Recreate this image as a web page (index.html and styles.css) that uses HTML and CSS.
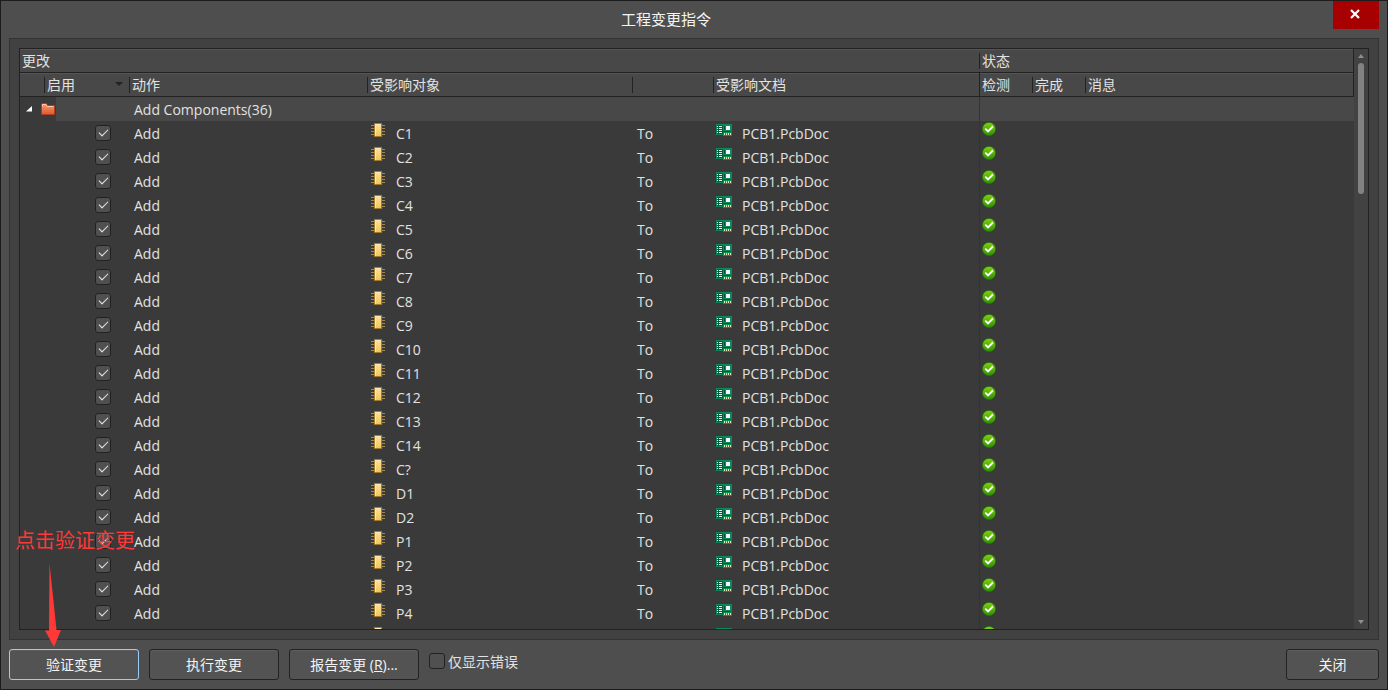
FILE: index.html
```html
<!DOCTYPE html>
<html lang="zh-CN">
<head>
<meta charset="utf-8">
<title>工程变更指令</title>
<link rel="stylesheet" href="styles.css">
</head>
<body>
<svg class="sprite" aria-hidden="true">
  <defs>
    <linearGradient id="chip-fill" x1="0" y1="0" x2="0" y2="1"><stop offset="0" stop-color="#fbe2a4"/><stop offset="1" stop-color="#f3c558"/></linearGradient>
    <linearGradient id="folder-fill" x1="0" y1="0" x2="0" y2="1"><stop offset="0" stop-color="#f79a6c"/><stop offset="1" stop-color="#dd5a35"/></linearGradient>
    <linearGradient id="ok-fill" x1="0" y1="0" x2="0" y2="1"><stop offset="0" stop-color="#7fd40c"/><stop offset="1" stop-color="#2f8f06"/></linearGradient>
  </defs>
  <symbol id="chip" viewBox="0 0 14 14">
    <path d="M0 2.5h14M0 5.5h14M0 8.5h14M0 11.5h14" stroke="#a08a45"/>
    <rect x="3.5" y=".5" width="7" height="13" fill="url(#chip-fill)" stroke="#a07c2c"/>
    <path d="M4.500 12.500V1.500H9.500" fill="none" stroke="#fdeab8"/>
  </symbol>
  <symbol id="board" viewBox="0 0 16 12">
    <path d="M0 0h16v12H7v-1H0z" fill="#0b8a5c"/>
    <path d="M1 1h6v9H1z" fill="#075c3e"/>
    <path d="M1 2.500h1M1 4.500h1M1 6.500h1M1 8.500h1M3 2.500h3M3 4.500h3M3 6.500h3M3 8.500h3" stroke="#dff3e6"/>
    <path d="M7 7.500h8M8.500 2v4" stroke="#06583b"/>
    <path d="M10 2h4v4h-4z" fill="#f4f4f4"/>
    <path d="M8 9.500h1M10 9.500h1M12 9.500h1M14 9.500h1M8 10.500h1M10 10.500h1M12 10.500h1M14 10.500h1" stroke="#e6e7b0"/>
  </symbol>
  <symbol id="ok" viewBox="0 0 14 14">
    <circle cx="7" cy="7" r="6.600" fill="url(#ok-fill)" stroke="#2c6d0c" stroke-width=".7"/>
    <path d="M3.300 6.700l2.700 2.800 4.900-5" fill="none" stroke="#fff" stroke-width="1.900"/>
  </symbol>
  <symbol id="folder" viewBox="0 0 14 12">
    <path d="M.5 11.500V1.500l1-1h4l1 2h7v9z" fill="url(#folder-fill)" stroke="#b23c1c"/>
    <path d="M1.500 3.500V1.500h3.500l1 2h6.500" fill="none" stroke="#ffc6a2"/>
  </symbol>
</svg>

<main class="dialog">
  <header class="titlebar">
    <h1 class="title">工程变更指令</h1>
    <button class="close" type="button" aria-label="关闭窗口"><svg width="10" height="10" viewBox="0 0 10 10"><path d="M1 1l8 8M9 1L1 9" stroke="#fff" stroke-width="2.200"/></svg></button>
  </header>

  <section class="panel">
    <div class="list">
      <div class="view">
        <table class="changes">
          <colgroup>
            <col class="col-tree"><col class="col-enable"><col class="col-action"><col class="col-object"><col class="col-to"><col class="col-doc"><col class="col-check"><col class="col-done"><col>
          </colgroup>
          <thead>
            <tr>
              <th colspan="6">更改</th>
              <th colspan="3" class="split">状态</th>
            </tr>
            <tr>
              <th></th>
              <th class="split sorted">启用</th>
              <th class="split">动作</th>
              <th class="split">受影响对象</th>
              <th class="split"></th>
              <th class="split">受影响文档</th>
              <th class="split full">检测</th>
              <th class="split">完成</th>
              <th class="split">消息</th>
            </tr>
          </thead>
          <tbody id="rows">
            <tr class="group">
              <td colspan="2"><div class="node"><svg class="arrow" viewBox="0 0 6 6"><path d="M6 0v5.500H0z" fill="#fff"/></svg><svg class="folder"><use href="#folder"/></svg></div></td>
              <td class="text" colspan="4">Add Components(36)</td>
              <td class="state"></td><td></td><td></td>
            </tr>
          </tbody>
        </table>
      </div>
      <div class="scrollbar">
        <svg class="tip" viewBox="0 0 6 4"><path d="M3 0l3 4H0z" fill="#8c8c8c"/></svg>
        <div class="thumb"></div>
        <svg class="tip end" viewBox="0 0 6 4"><path d="M0 0h6L3 4z" fill="#8c8c8c"/></svg>
      </div>
    </div>
  </section>

  <footer class="actions">
    <button class="btn primary" type="button">验证变更</button>
    <button class="btn" type="button">执行变更</button>
    <button class="btn" type="button">报告变更 (<u>R</u>)...</button>
    <label class="filter"><input class="tick" type="checkbox">仅显示错误</label>
    <button class="btn dismiss" type="button">关闭</button>
  </footer>

  <div class="note">
    <span class="note-text">点击验证变更</span>
    <svg class="note-arrow" viewBox="0 0 16 84"><path d="M4.500 0L11.500 67H16L9 84 0 67.500H4z" fill="#ff3838"/></svg>
  </div>
</main>
<script src="rows.js"></script>
</body>
</html>
```
FILE: styles.css
```css
* { box-sizing: border-box; }

body {
  margin: 0;
  background: #1c1c1c;
  color: #e2e2e2;
  font: 14px/20px "Open Sans", "Noto Sans CJK SC", sans-serif;
}

button, input { font: inherit; color: inherit; margin: 0; }

.sprite { position: absolute; width: 0; height: 0; }

.dialog {
  position: relative;
  display: flex;
  flex-direction: column;
  height: 100vh;
  padding: 0 8px;
  background: #4e4e4e;
  border: 1px solid #1c1c1c;
}

.titlebar {
  display: grid;
  grid-template-columns: 1fr 46px;
  height: 37px;
  flex: none;
}
.title {
  margin: 0;
  padding: 8px 10px 0 0;
  font-size: 15px;
  line-height: 20px;
  font-weight: 400;
  text-align: center;
  color: #f4f4f4;
}
.close {
  display: grid;
  place-items: center;
  height: 28px;
  padding: 0 2px 2px 0;
  border: 0;
  background: #a60000;
}

.panel {
  flex: 1;
  min-height: 0;
  display: flex;
  padding: 9px;
  background: #414141;
  border: 1px solid #333;
}
.list {
  flex: 1;
  min-width: 0;
  display: flex;
  border: 1px solid #222;
}
.view { flex: 1; min-width: 0; overflow: hidden; background: #3a3a3a; }

.changes { width: 100%; table-layout: fixed; border-collapse: separate; border-spacing: 0; }
.col-tree { width: 24px; }
.col-enable { width: 85px; }
.col-action { width: 238px; }
.col-object { width: 265px; }
.col-to { width: 81px; }
.col-doc { width: 266px; }
.col-check { width: 53px; }
.col-done { width: 53px; }

.changes th {
  position: relative;
  height: 24px;
  padding: 0 2px;
  border-bottom: 1px solid #222;
  background: #484848;
  box-shadow: inset 0 1px #555;
  font-weight: 400;
  text-align: left;
}
.changes th:last-child { border-right: 1px solid #222; }
.changes th.split { padding-left: 3px; }
.split::before {
  content: "";
  position: absolute;
  left: 0;
  top: 4px;
  width: 1px;
  height: 16px;
  background: #222;
}
.split.full::before { top: 0; height: 23px; }
.sorted::after {
  content: "";
  position: absolute;
  right: 6px;
  top: 9px;
  border: 4px solid transparent;
  border-top-color: #222;
  border-bottom: 0;
}

.changes td { height: 24px; padding: 0; line-height: 20px; }
.changes .text { padding: 2px 0 0 5px; }
.group td { background: #484848; }
.changes .state { border-left: 1px solid #333; vertical-align: top; }
.node { display: flex; align-items: center; gap: 9px; width: 36px; height: 24px; padding-left: 6px; background: #3a3a3a; }
.arrow { width: 6px; height: 6px; }
.folder { width: 14px; height: 12px; }

.toggle { display: flex; padding-left: 51px; }
.tick {
  appearance: none;
  width: 16px;
  height: 16px;
  border: 1px solid #222;
  border-radius: 3px;
  background: #505050;
}
.toggle .tick {
  display: grid;
  place-items: center;
}
.toggle .tick:checked::before {
  content: "";
  width: 8px;
  height: 4px;
  border: solid #ececec;
  border-width: 0 0 1px 1px;
  rotate: -45deg;
  translate: 0 -2px;
}

.item { display: flex; height: 24px; padding: 2px 0 0 4px; }
.item span { padding-top: 1px; }
.chip { width: 14px; height: 14px; margin-right: 11px; }
.board { width: 16px; height: 12px; margin: 1px 10px 0 -1px; }
.ok { display: block; width: 14px; height: 14px; margin: 1px 0 0 2px; }

.scrollbar {
  flex: none;
  display: flex;
  flex-direction: column;
  align-items: center;
  width: 14px;
  padding: 5px 0;
  background: #424242;
}
.tip { width: 6px; height: 4px; }
.tip.end { margin-top: auto; }
.thumb { width: 6px; height: 131px; margin-top: 5px; border-radius: 3px; background: #828282; }

.actions {
  flex: none;
  display: flex;
  align-items: flex-start;
  gap: 10px;
  padding: 9px 0;
}
.btn {
  width: 130px;
  height: 31px;
  padding: 0;
  border: 1px solid #222;
  border-radius: 3px;
  background: #535353;
  box-shadow: inset 0 1px #5e5e5e;
  color: #f4f4f4;
}
.btn.primary { border-color: #9ccbf5; }
.btn.dismiss { width: 93px; margin-left: auto; }
.filter { display: flex; gap: 3px; padding-top: 3px; }
.filter .tick { margin-top: 1px; }

.note {
  position: absolute;
  left: 14px;
  bottom: 42px;
  color: #ff3838;
  pointer-events: none;
}
.note-text { display: block; font-size: 20px; line-height: 24px; }
.note-arrow { display: block; width: 16px; height: 84px; margin: 10px 0 0 30px; }
```
FILE: rows.js
```js
const designators = [
  "C1", "C2", "C3", "C4", "C5", "C6", "C7", "C8", "C9", "C10", "C11",
  "C12", "C13", "C14", "C?", "D1", "D2", "P1", "P2", "P3", "P4", "P5"
];

document.getElementById("rows").insertAdjacentHTML("beforeend", designators.map(name => `
  <tr>
    <td></td>
    <td><div class="toggle"><input class="tick" type="checkbox" checked aria-label="启用 ${name}"></div></td>
    <td class="text">Add</td>
    <td><div class="item"><svg class="chip"><use href="#chip"/></svg><span>${name}</span></div></td>
    <td class="text">To</td>
    <td><div class="item"><svg class="board"><use href="#board"/></svg><span>PCB1.PcbDoc</span></div></td>
    <td class="state"><svg class="ok"><use href="#ok"/></svg></td>
    <td></td>
    <td></td>
  </tr>`).join(""));
```
